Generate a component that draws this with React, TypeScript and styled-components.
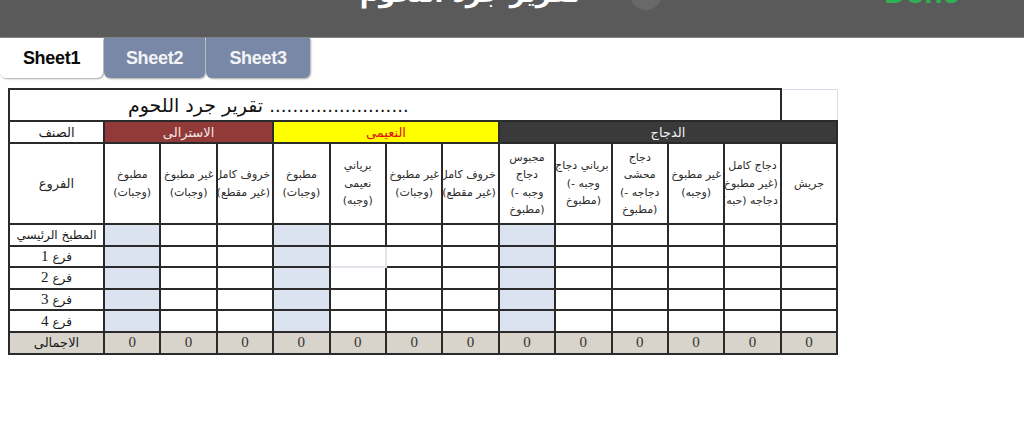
import React from "react";
import styled, { createGlobalStyle } from "styled-components";

const GlobalStyle = createGlobalStyle`
  html, body { margin: 0; padding: 0; background: #ffffff; }
  body { font-family: "Liberation Sans", "DejaVu Sans", sans-serif; }
`;

const TopBar = styled.header`
  height: 37px;
  background: #5a5a5a;
  border-bottom: 1px solid #858585;
  overflow: hidden;
  display: flex;
  align-items: flex-start;
`;

const TopInner = styled.div`
  display: flex;
  align-items: flex-end;
  height: 34px;
  margin-top: -25px;
  padding-left: 360px;
`;

const TopTitle = styled.span`
  font: bold 26px "DejaVu Sans", sans-serif;
  color: #ffffff;
  direction: rtl;
  white-space: nowrap;
  line-height: 32px;
`;

const TopCircle = styled.span`
  width: 32px;
  height: 32px;
  border-radius: 50%;
  background: #696969;
  margin-left: 50px;
  margin-bottom: -1px;
`;

const DoneText = styled.span`
  font: bold 30px "Liberation Sans", sans-serif;
  color: #2fb153;
  margin-left: 222px;
  line-height: 30px;
  margin-bottom: 1px;
`;

const TabBar = styled.nav`
  display: flex;
  height: 40px;
  gap: 1px;
`;

const Tab = styled.div<{ $active?: boolean; $w: number }>`
  width: ${(p) => p.$w}px;
  height: 40px;
  display: flex;
  align-items: center;
  justify-content: center;
  border-radius: 0 0 6px 6px;
  background: ${(p) => (p.$active ? "#ffffff" : "#7a88a7")};
  color: ${(p) => (p.$active ? "#0a0a0a" : "#f3f4f7")};
  box-shadow: 1px 1px 2px rgba(0, 0, 0, 0.35);
  font: bold 18px "Liberation Sans", sans-serif;
  letter-spacing: -0.3px;
`;

const Sheet = styled.div`
  padding: 10px 0 0 8px;
`;

const Grid = styled.table`
  border-collapse: collapse;
  table-layout: fixed;
  width: 829px;
`;

const TitleCell = styled.td`
  height: 30px;
  border: 2px solid #2a2a2a;
  padding: 0;
`;

const TitleText = styled.div`
  display: flex;
  align-items: baseline;
  padding-left: 118px;
  gap: 6px;
  font: 19px "DejaVu Sans", sans-serif;
  color: #111;
  line-height: 28px;
`;

const Arabic = styled.span`
  direction: rtl;
  unicode-bidi: isolate;
`;

const Dots = styled.span`
  font-size: 18px;
  letter-spacing: 0.1px;
`;

const GhostCell = styled.td`
  border: 1px solid #d7dbea;
  border-left: none;
`;

const CatCell = styled.td<{ $bg: string; $fg: string }>`
  height: 20px;
  border: 2px solid #2a2a2a;
  background: ${(p) => p.$bg};
  color: ${(p) => p.$fg};
  font: 13px "DejaVu Sans", sans-serif;
  text-align: center;
  direction: rtl;
  padding: 0;
`;

const HeadCell = styled.td<{ $big?: boolean }>`
  height: 79px;
  border: 2px solid #2a2a2a;
  font: ${(p) => (p.$big ? 13 : 11)}px "DejaVu Sans", sans-serif;
  color: #2c2c2c;
  text-align: center;
  direction: rtl;
  white-space: nowrap;
  overflow: hidden;
  padding: 0 2px;
  line-height: 17.5px;
`;

const Line = styled.div``;

const LabelCell = styled.td`
  height: 19.6px;
  border: 2px solid #2a2a2a;
  font: 12px "DejaVu Sans", "Liberation Serif", serif;
  color: #1a1a1a;
  text-align: center;
  direction: rtl;
  white-space: nowrap;
  padding: 0;
`;

const Num = styled.span`
  font-family: "Liberation Serif", serif;
  font-size: 15px;
`;

const DataCell = styled.td<{ $blue?: boolean; $ghost?: boolean }>`
  height: 19.6px;
  border: 2px solid #2a2a2a;
  background: ${(p) => (p.$blue ? "#dae3ef" : "#ffffff")};
  padding: 0;
  ${(p) =>
    p.$ghost
      ? `border-right: 2px solid #e4e4ec; border-bottom: 2px solid #e4e4ec;`
      : ""}
`;

const TotalCell = styled.td`
  height: 19.6px;
  border: 2px solid #2a2a2a;
  background: #d8d4cb;
  text-align: center;
  font: 15px "Liberation Serif", serif;
  color: #333;
  padding: 0;
`;

const TotalLabel = styled(TotalCell)`
  font: 13px "DejaVu Sans", sans-serif;
  color: #1a1a1a;
  direction: rtl;
`;

type Col = { lines: string[]; blue?: boolean };

const columns: Col[] = [
  { lines: ["مطبوخ", "(وجبات)"], blue: true },
  { lines: ["غير مطبوخ", "(وجبات)"] },
  { lines: ["خروف كامل", "(غير مقطع)"] },
  { lines: ["مطبوخ", "(وجبات)"], blue: true },
  { lines: ["برياني", "نعيمى", "(وجبه)"] },
  { lines: ["غير مطبوخ", "(وجبات)"] },
  { lines: ["خروف كامل", "(غير مقطع)"] },
  { lines: ["مجبوس", "دجاج", "وجبه -)", "(مطبوخ"], blue: true },
  { lines: ["برياني دجاج", "وجبه -)", "(مطبوخ"] },
  { lines: ["دجاج", "محشى", "دجاجه -)", "(مطبوخ"] },
  { lines: ["غير مطبوخ", "(وجبه)"] },
  { lines: ["دجاج كامل", "(غير مطبوخ)", "دجاجه (حبه)"] },
  { lines: ["جريش"] },
];

const rows: { label: string; num?: string }[] = [
  { label: "المطبخ الرئيسي" },
  { label: "فرع ", num: "1" },
  { label: "فرع ", num: "2" },
  { label: "فرع ", num: "3" },
  { label: "فرع ", num: "4" },
];

export default function App() {
  return (
    <>
      <GlobalStyle />
      <TopBar>
        <TopInner>
          <TopTitle>تقرير جرد اللحوم</TopTitle>
          <TopCircle />
          <DoneText>Done</DoneText>
        </TopInner>
      </TopBar>
      <TabBar>
        <Tab $active $w={103}>Sheet1</Tab>
        <Tab $w={101}>Sheet2</Tab>
        <Tab $w={104}>Sheet3</Tab>
      </TabBar>
      <Sheet>
        <Grid>
          <colgroup>
            <col style={{ width: 95 }} />
            {columns.map((_, i) => (
              <col key={i} style={{ width: 56.4 }} />
            ))}
          </colgroup>
          <tbody>
            <tr>
              <TitleCell colSpan={13}>
                <TitleText>
                  <Arabic>تقرير جرد اللحوم</Arabic>
                  <Dots>........................</Dots>
                </TitleText>
              </TitleCell>
              <GhostCell />
            </tr>
            <tr>
              <CatCell $bg="#ffffff" $fg="#1a1a1a">الصنف</CatCell>
              <CatCell colSpan={3} $bg="#923a37" $fg="#f3e6e6">الاسترالى</CatCell>
              <CatCell colSpan={4} $bg="#ffff00" $fg="#e01010">النعيمى</CatCell>
              <CatCell colSpan={6} $bg="#3a3a3a" $fg="#f2f2f2">الدجاج</CatCell>
            </tr>
            <tr>
              <HeadCell $big>الفروع</HeadCell>
              {columns.map((c, i) => (
                <HeadCell key={i}>
                  {c.lines.map((l, j) => (
                    <Line key={j}>{l}</Line>
                  ))}
                </HeadCell>
              ))}
            </tr>
            {rows.map((r, ri) => (
              <tr key={ri}>
                <LabelCell>
                  {r.label}
                  {r.num && <Num>{r.num}</Num>}
                </LabelCell>
                {columns.map((c, ci) => (
                  <DataCell key={ci} $blue={c.blue} $ghost={ri === 1 && ci === 4} />
                ))}
              </tr>
            ))}
            <tr>
              <TotalLabel>الاجمالى</TotalLabel>
              {columns.map((_, ci) => (
                <TotalCell key={ci}>0</TotalCell>
              ))}
            </tr>
          </tbody>
        </Grid>
      </Sheet>
    </>
  );
}
